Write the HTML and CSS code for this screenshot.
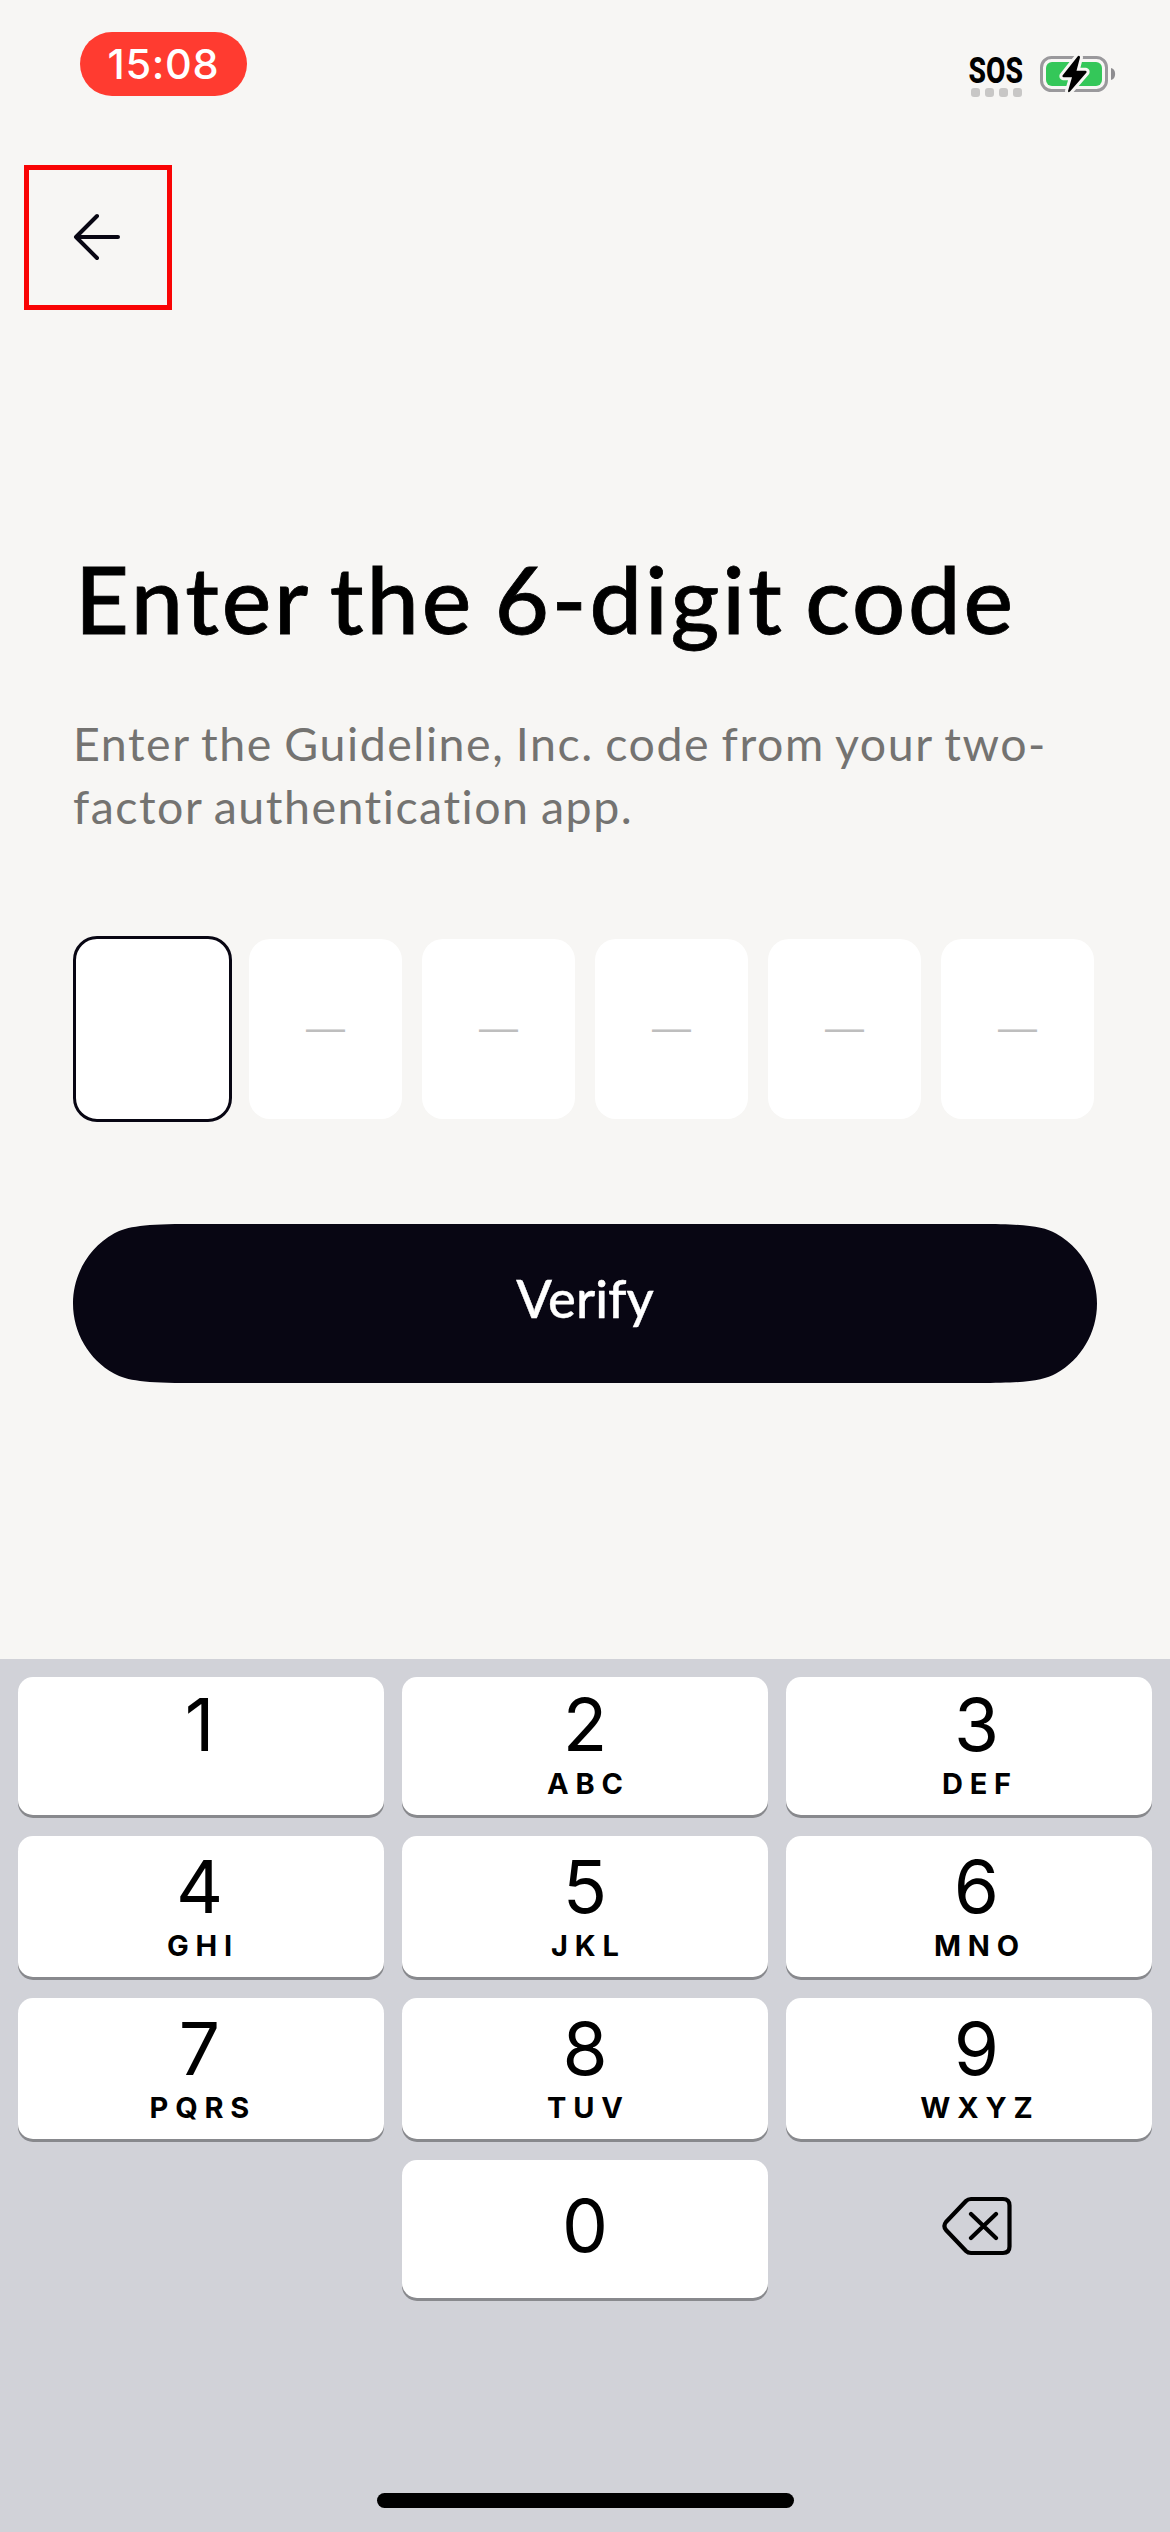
FILE: index.html
```html
<!DOCTYPE html>
<html lang="en">
<head>
<meta charset="utf-8">
<title>Enter the 6-digit code</title>
<link rel="stylesheet" href="styles.css">
</head>
<body>
<div class="screen">
  <header class="status">
    <span class="clock">15:08</span>
    <div class="indicators">
      <div class="signal">
        <svg class="sos" width="56" height="30" viewBox="0 0 56 30"><text x="0.500" y="27.500" textLength="54.500" lengthAdjust="spacingAndGlyphs">SOS</text></svg>
        <div class="dots"><i></i><i></i><i></i><i></i></div>
      </div>
      <svg class="battery" width="76" height="40" viewBox="0 0 76 40">
        <rect x="1.5" y="3.5" width="65" height="33" rx="10" fill="none" stroke="#9a999c" stroke-width="3"/>
        <rect x="6" y="8" width="56" height="24" rx="6" fill="#34c759"/>
        <path d="M71 14a5.5 6.2 0 0 1 0 12z" fill="#8e8d90"/>
        <path d="M38 2L22.5 21.5Q22 23 23.500 23.300H32L28 37Q28 39 30 37.500L46.500 18.500Q47 17 45.500 16.700H36.500L40 3.500Q40 1 38 2z" fill="#000" stroke="#f7f6f4" stroke-width="6" stroke-linejoin="round" paint-order="stroke"/>
      </svg>
    </div>
  </header>

  <button class="back" aria-label="Back">
    <svg width="50" height="50" viewBox="0 0 50 50" fill="none" stroke="#080613" stroke-width="4" stroke-linecap="round" stroke-linejoin="round"><path d="M46 25H4M25 4L4 25L25 46"/></svg>
  </button>

  <main class="content">
    <h1 class="title">Enter the 6-digit code</h1>
    <p class="hint"><span class="line one">Enter the Guideline, Inc. code from your two-</span><span class="line two">factor authentication app.</span></p>
    <div class="code">
      <span class="cell active"></span>
      <span class="cell">—</span>
      <span class="cell">—</span>
      <span class="cell">—</span>
      <span class="cell">—</span>
      <span class="cell">—</span>
    </div>
    <button class="verify"><span class="verify-label">Verify</span></button>
  </main>

  <section class="keyboard">
    <div class="keys">
      <div class="key left"><span class="digit">1</span></div>
      <div class="key"><span class="digit">2</span><span class="letters">ABC</span></div>
      <div class="key right"><span class="digit">3</span><span class="letters">DEF</span></div>
      <div class="key tall left"><span class="digit">4</span><span class="letters">GHI</span></div>
      <div class="key tall"><span class="digit">5</span><span class="letters">JKL</span></div>
      <div class="key tall right"><span class="digit">6</span><span class="letters">MNO</span></div>
      <div class="key tall left"><span class="digit">7</span><span class="letters">PQRS</span></div>
      <div class="key tall"><span class="digit">8</span><span class="letters">TUV</span></div>
      <div class="key tall right"><span class="digit">9</span><span class="letters">WXYZ</span></div>
      <div class="key zero"><span class="digit">0</span></div>
      <div class="delete">
        <svg width="70" height="60" viewBox="0 0 70 60" fill="none" stroke="#000" stroke-width="4.200" stroke-linecap="round" stroke-linejoin="round"><path d="M29 3H61Q67.500 3 67.500 9.500V50.500Q67.500 57 61 57H29Q26 57 24 55L4 34Q0.800 30 4 26L24 5Q26 3 29 3zM29 18L54 42M54 18L29 42"/></svg>
      </div>
    </div>
    <div class="home"></div>
  </section>
</div>
</body>
</html>
```
FILE: styles.css
```css
* { box-sizing: border-box; }
body { margin: 0; background: #f7f6f4; }
button { border: 0; padding: 0; background: none; }

.screen {
  width: 1170px;
  height: 2532px;
  display: flex;
  flex-direction: column;
  background: #f7f6f4;
  overflow: hidden;
}

.status {
  height: 165px;
  padding: 32px 54px 0 80px;
  display: flex;
  justify-content: space-between;
  align-items: flex-start;
}
.clock {
  width: 167px;
  height: 64px;
  border-radius: 32px;
  background: #ff3b30;
  color: #fff;
  font: 500 41.500px/65px Inter, sans-serif;
  letter-spacing: 0.700px;
  text-align: center;
}
.indicators { display: flex; gap: 16px; padding-top: 22px; }
.signal { width: 56px; padding-top: 1px; }
.sos { display: block; overflow: visible; font: 800 37px Roboto, sans-serif; }
.dots { display: flex; gap: 5px; padding: 3px 0 0 3px; }
.dots i { width: 9px; height: 9px; border-radius: 3px; background: #c8c7c6; }
.battery { display: block; }

.back {
  width: 148px;
  height: 145px;
  margin-left: 24px;
  padding: 0 2px 1px 0;
  border: 5px solid #f90404;
  display: flex;
  align-items: center;
  justify-content: center;
}

.content {
  height: 1349px;
  padding: 232px 73px 0;
  display: flex;
  flex-direction: column;
}
.title {
  margin: 0 0 58px;
  padding-left: 2px;
  font: 500 93.500px/112px Lato, sans-serif;
  letter-spacing: 2.900px;
  word-spacing: -6px;
  -webkit-text-stroke: 0.800px #000;
  color: #000;
  white-space: nowrap;
}
.hint {
  margin: 0;
  height: 224px;
  font: 400 46.500px/63.300px Lato, sans-serif;
  color: #747371;
  white-space: nowrap;
}
.line { display: block; }
.one { letter-spacing: 1.550px; word-spacing: -2px; }
.two { letter-spacing: 1.500px; word-spacing: -2px; }

.code { display: grid; grid-template-columns: repeat(6, 1fr); gap: 14px; }
.cell {
  height: 186px;
  border: 3px solid transparent;
  border-radius: 24px;
  background: #fff padding-box;
  color: #bebebe;
  font: 39px/178px "Liberation Sans", sans-serif;
  text-align: center;
}
.cell.active { border-color: #080613; }

.verify {
  height: 159px;
  margin-top: 102px;
  padding-bottom: 11px;
  background: #080613;
  color: #fff;
  font: 500 52.500px/148px Lato, sans-serif;
  -webkit-text-stroke: 0.400px #fff;
  clip-path: path("M0 79.500C0 50.600 15.700 23.500 41 9.500C54 2.300 72 0 118 0H906C952 0 970 2.300 983 9.500C1008.300 23.500 1024 50.600 1024 79.500C1024 108.400 1008.300 135.500 983 149.500C970 156.700 952 159 906 159H118C72 159 54 156.700 41 149.500C15.700 135.500 0 108.400 0 79.500z");
}

.keyboard {
  height: 873px;
  padding: 18px 18px 24px;
  display: flex;
  flex-direction: column;
  align-items: center;
  justify-content: space-between;
  background: #d1d2d8;
}
.keys {
  width: 1134px;
  display: grid;
  grid-template-columns: repeat(3, 366px);
  grid-template-rows: 138px 141px 141px 138px;
  gap: 21px 18px;
}
.key {
  padding-top: 8px;
  border-radius: 15px;
  background: #fff;
  box-shadow: 0 3px 0 #88898d;
  display: flex;
  flex-direction: column;
  align-items: center;
  gap: 4px;
  font-family: Inter, sans-serif;
  color: #000;
}
.tall { padding-top: 11px; }
.left { padding-right: 3px; }
.right { padding-left: 15px; }
.zero { grid-column: 2; padding-top: 26px; }
.digit { font-size: 73px; line-height: 80px; }
.letters {
  font-size: 29px;
  line-height: 30px;
  font-weight: 700;
  letter-spacing: 6.800px;
  margin-right: -6.800px;
}
.delete {
  padding: 36px 0 0 15px;
  display: flex;
  justify-content: center;
}
.home { width: 417px; height: 15px; border-radius: 8px; background: #000; }
```
